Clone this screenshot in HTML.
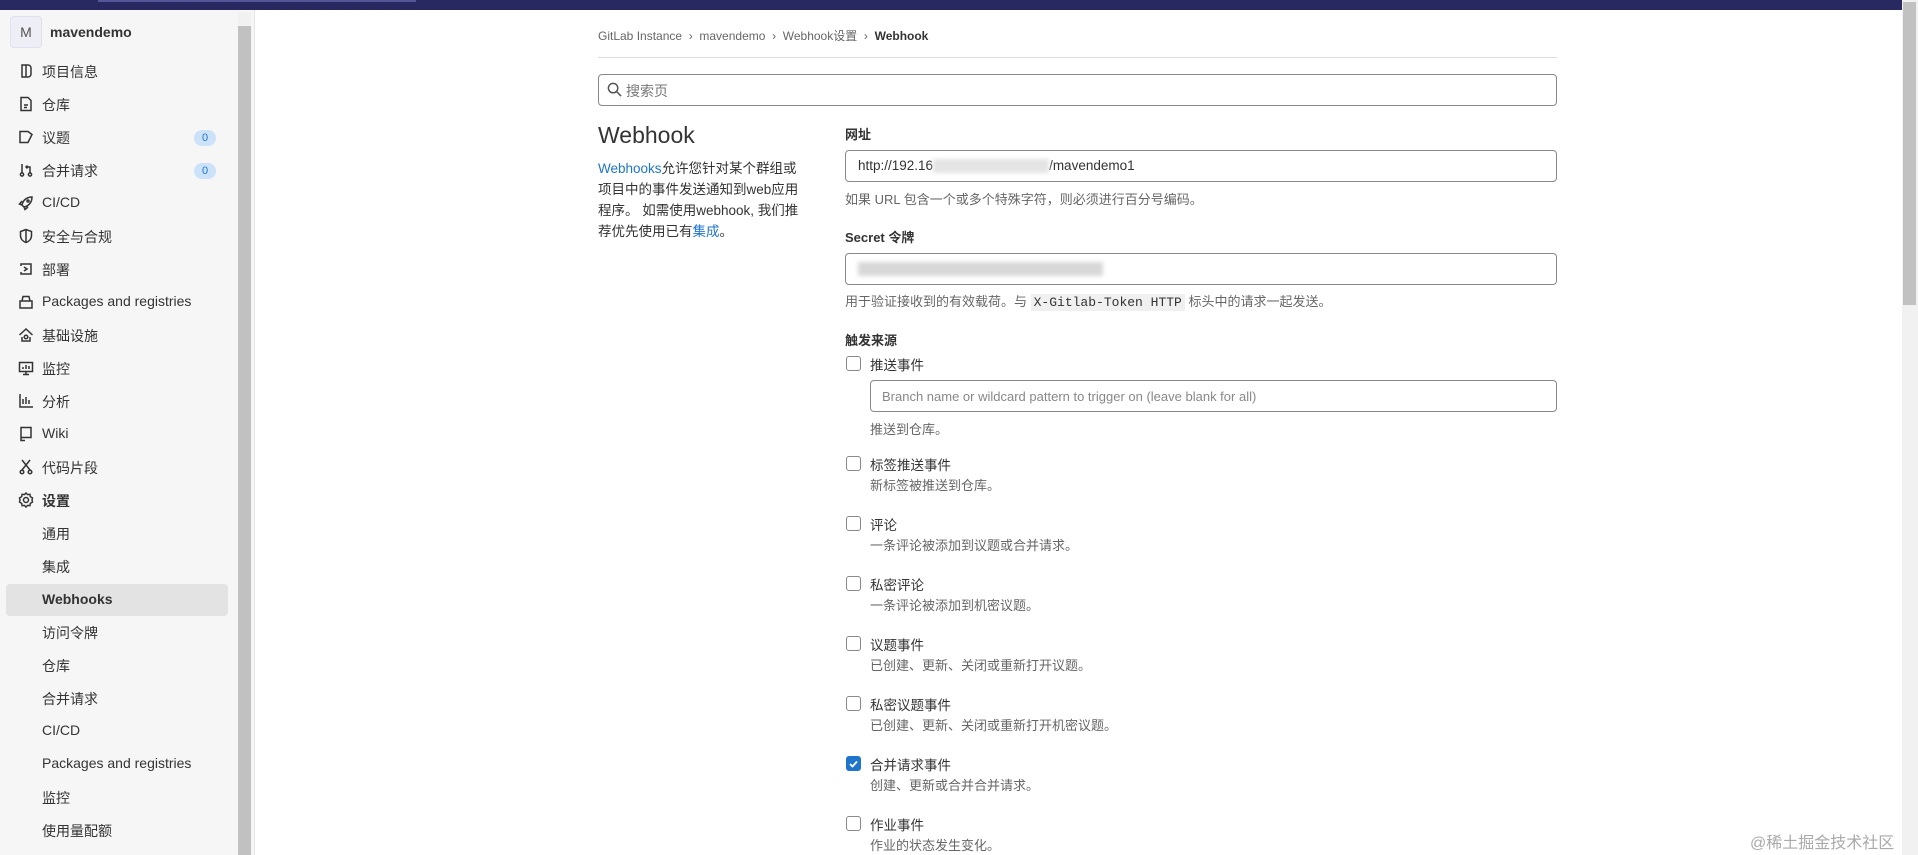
<!DOCTYPE html>
<html><head><meta charset="utf-8"><style>
*{box-sizing:border-box;margin:0;padding:0}
body{width:1918px;height:855px;overflow:hidden;background:#fff;font-family:"Liberation Sans","Noto Sans CJK SC",sans-serif;color:#333;position:relative;font-size:14px}
.a{position:absolute;white-space:nowrap}
.top{left:0;top:0;width:1902px;height:10px;background:#292961}
.sb{left:0;top:10px;width:255px;height:845px;background:#f6f6f6;border-right:1px solid #e5e5e5}
.nav{left:42px;font-size:14px;color:#333}
.ic{left:18px;width:16px;height:16px}
.sub{left:42px;font-size:14px;color:#333}
.badge{left:194px;width:22px;height:16px;border-radius:8px;background:#cbe2f9;color:#1f75cb;font-size:11px;text-align:center;line-height:16px}
.inp{border:1px solid #89888d;border-radius:4px;background:#fff}
.help{color:#666;font-size:13px}
.lbl{font-weight:bold;font-size:13px;color:#333}
.cb{left:846px;width:15px;height:15px;border:1px solid #89888d;border-radius:3px;background:#fff}
.ct{left:870px;font-size:13.5px;color:#333}
.cd{left:870px;font-size:13px;color:#666}
</style></head><body>
<div class="a top"></div>
<div class="a" style="left:98px;top:0;width:318px;height:2px;background:#55559a"></div>
<div class="a sb"></div>
<div class="a" style="left:238px;top:12px;width:13px;height:843px;background:#c1c1c1"></div>
<div class="a" style="left:238px;top:12px;width:13px;height:14px;background:#f1f1f1"></div>
<div class="a" style="left:10px;top:16px;width:32px;height:32px;border:1px solid #e0e0ee;border-radius:4px;background:#eeeef6;text-align:center;line-height:30px;font-size:14px;color:#555">M</div>
<div class="a" style="left:50px;top:24px;font-size:14px;font-weight:bold;color:#333">mavendemo</div>

<svg class="a ic" style="top:63px" viewBox="0 0 16 16" fill="none" stroke="#333" stroke-width="1.5"><path d="M4 2h6a3 3 0 0 1 3 3v6a3 3 0 0 1-3 3H4z M8 2v12"/></svg><div class="a nav" style="top:62px">项目信息</div>
<svg class="a ic" style="top:96px" viewBox="0 0 16 16" fill="none" stroke="#333" stroke-width="1.5"><path d="M3 1.5h7l3 3v10H3z M6 9h4 M6 11.5h3"/></svg><div class="a nav" style="top:95px">仓库</div>
<svg class="a ic" style="top:129px" viewBox="0 0 16 16" fill="none" stroke="#333" stroke-width="1.5"><path d="M2 2.5h8l4 3-4 8H2z"/></svg><div class="a nav" style="top:128px">议题</div><div class="a badge" style="top:130px">0</div>
<svg class="a ic" style="top:162px" viewBox="0 0 16 16" fill="none" stroke="#333" stroke-width="1.5"><circle cx="4" cy="12.5" r="1.6"/><circle cx="12" cy="12.5" r="1.6"/><path d="M4 2v9 M12 11V5H8 M9.5 3.5 8 5l1.5 1.5"/></svg><div class="a nav" style="top:161px">合并请求</div><div class="a badge" style="top:163px">0</div>
<svg class="a ic" style="top:195px" viewBox="0 0 16 16" fill="none" stroke="#333" stroke-width="1.5"><path d="M14 2C9 2 5 5 4 10l2 2c5-1 8-5 8-10z M4 10 1.5 9 4 6 M6 12l1 2.5 3-2.5"/><circle cx="10" cy="6" r="1"/></svg><div class="a nav" style="top:194px">CI/CD</div>
<svg class="a ic" style="top:228px" viewBox="0 0 16 16" fill="none" stroke="#333" stroke-width="1.5"><path d="M8 1.5 2.5 3.5v4c0 3.5 2.5 6 5.5 7 3-1 5.5-3.5 5.5-7v-4z M8 2v12"/></svg><div class="a nav" style="top:227px">安全与合规</div>
<svg class="a ic" style="top:261px" viewBox="0 0 16 16" fill="none" stroke="#333" stroke-width="1.5"><path d="M3 5V3h10v10H3v-2 M6 6l3 2-3 2"/></svg><div class="a nav" style="top:260px">部署</div>
<svg class="a ic" style="top:294px" viewBox="0 0 16 16" fill="none" stroke="#333" stroke-width="1.5"><path d="M2 7h12v7H2z M4 7l1-4.5h6L12 7"/></svg><div class="a nav" style="top:293px">Packages and registries</div>
<svg class="a ic" style="top:327px" viewBox="0 0 16 16" fill="none" stroke="#333" stroke-width="1.5"><path d="M1.5 8 8 2l6.5 6 M4 10v4h8v-4"/><circle cx="8" cy="10" r="1.8"/></svg><div class="a nav" style="top:326px">基础设施</div>
<svg class="a ic" style="top:360px" viewBox="0 0 16 16" fill="none" stroke="#333" stroke-width="1.5"><path d="M1.5 2.5h13v9h-13z M8 11.5v3 M5 14.5h6 M5 9V7 M8 9V5 M11 9V6"/></svg><div class="a nav" style="top:359px">监控</div>
<svg class="a ic" style="top:393px" viewBox="0 0 16 16" fill="none" stroke="#333" stroke-width="1.5"><path d="M2 1v13h13 M5 11V6 M8 11V4 M11 11V7"/></svg><div class="a nav" style="top:392px">分析</div>
<svg class="a ic" style="top:426px" viewBox="0 0 16 16" fill="none" stroke="#333" stroke-width="1.5"><path d="M3 1.5h10v10H3z M3 11.5v3h4"/></svg><div class="a nav" style="top:425px">Wiki</div>
<svg class="a ic" style="top:459px" viewBox="0 0 16 16" fill="none" stroke="#333" stroke-width="1.5"><path d="M4 1l8 10 M12 1 4 11"/><circle cx="4" cy="13" r="1.8"/><circle cx="12" cy="13" r="1.8"/></svg><div class="a nav" style="top:458px">代码片段</div>
<svg class="a ic" style="top:492px" viewBox="0 0 16 16" fill="none" stroke="#333" stroke-width="1.5"><circle cx="8" cy="8" r="2.5"/><path d="M8 1l1.6 1.6 2.3-.3.4 2.3L14.5 6 14 8l.5 2-2.2 1.4-.4 2.3-2.3-.3L8 15l-1.6-1.6-2.3.3-.4-2.3L1.5 10 2 8l-.5-2 2.2-1.4.4-2.3 2.3.3z"/></svg><div class="a nav" style="top:491px;font-weight:bold">设置</div>
<div class="a sub" style="top:524px">通用</div>
<div class="a sub" style="top:557px">集成</div>
<div class="a" style="left:6px;top:584px;width:222px;height:32px;border-radius:4px;background:#e3e3e3"></div>
<div class="a sub" style="top:591px;font-weight:bold">Webhooks</div>
<div class="a sub" style="top:623px">访问令牌</div>
<div class="a sub" style="top:656px">仓库</div>
<div class="a sub" style="top:689px">合并请求</div>
<div class="a sub" style="top:722px">CI/CD</div>
<div class="a sub" style="top:755px">Packages and registries</div>
<div class="a sub" style="top:788px">监控</div>
<div class="a sub" style="top:821px">使用量配额</div>

<div class="a" style="left:1902px;top:0;width:16px;height:855px;background:#f1f1f1"></div>
<div class="a" style="left:1903px;top:2px;width:13px;height:303px;background:#c1c1c1"></div>

<div class="a" style="left:598px;top:27px;font-size:12px;color:#666">GitLab Instance &nbsp;›&nbsp; mavendemo &nbsp;›&nbsp; Webhook设置 &nbsp;›&nbsp; <span style="color:#333;font-weight:bold">Webhook</span></div>
<div class="a" style="left:598px;top:57px;width:959px;height:1px;background:#dcdcde"></div>
<div class="a inp" style="left:598px;top:74px;width:959px;height:32px"></div>
<svg class="a" style="left:607px;top:82px" width="15" height="15" viewBox="0 0 16 16" fill="none" stroke="#555" stroke-width="1.6"><circle cx="6.5" cy="6.5" r="5"/><path d="M10.5 10.5 15 15"/></svg>
<div class="a" style="left:626px;top:81px;font-size:14px;color:#777">搜索页</div>

<div class="a" style="left:598px;top:122px;font-size:23px;color:#333">Webhook</div>
<div class="a" style="left:598px;top:158px;width:210px;white-space:normal;word-break:break-all;font-size:13.5px;line-height:21px;color:#333"><span style="color:#1f75cb">Webhooks</span>允许您针对某个群组或项目中的事件发送通知到web应用程序。 如需使用webhook, 我们推荐优先使用已有<span style="color:#1f75cb">集成</span>。</div>

<div class="a lbl" style="left:845px;top:124px">网址</div>
<div class="a inp" style="left:845px;top:150px;width:712px;height:32px"></div>
<div class="a" style="left:858px;top:158px;font-size:13.5px;color:#333">http://192.16<span style="display:inline-block;width:116px;height:14px;background:#e4e4e4;vertical-align:middle;filter:blur(2px)"></span>/mavendemo1</div>
<div class="a help" style="left:845px;top:189px">如果 URL 包含一个或多个特殊字符，则必须进行百分号编码。</div>
<div class="a lbl" style="left:845px;top:227px">Secret 令牌</div>
<div class="a inp" style="left:845px;top:253px;width:712px;height:32px"></div>
<div class="a" style="left:858px;top:262px;width:245px;height:14px;background:#d8d8d8;filter:blur(2px)"></div>
<div class="a help" style="left:845px;top:291px">用于验证接收到的有效载荷。与 <span style="font-family:'Liberation Mono',monospace;background:#f0f0f0;color:#333;padding:1px 3px">X-Gitlab-Token HTTP</span> 标头中的请求一起发送。</div>
<div class="a lbl" style="left:845px;top:330px">触发来源</div>

<div class="a cb" style="top:356px"></div><div class="a ct" style="top:354px">推送事件</div>
<div class="a inp" style="left:870px;top:380px;width:687px;height:32px"></div>
<div class="a" style="left:882px;top:389px;font-size:13px;color:#888">Branch name or wildcard pattern to trigger on (leave blank for all)</div>
<div class="a cd" style="top:419px">推送到仓库。</div>

<div class="a cb" style="top:456px"></div><div class="a ct" style="top:454px">标签推送事件</div><div class="a cd" style="top:475px">新标签被推送到仓库。</div>
<div class="a cb" style="top:516px"></div><div class="a ct" style="top:514px">评论</div><div class="a cd" style="top:535px">一条评论被添加到议题或合并请求。</div>
<div class="a cb" style="top:576px"></div><div class="a ct" style="top:574px">私密评论</div><div class="a cd" style="top:595px">一条评论被添加到机密议题。</div>
<div class="a cb" style="top:636px"></div><div class="a ct" style="top:634px">议题事件</div><div class="a cd" style="top:655px">已创建、更新、关闭或重新打开议题。</div>
<div class="a cb" style="top:696px"></div><div class="a ct" style="top:694px">私密议题事件</div><div class="a cd" style="top:715px">已创建、更新、关闭或重新打开机密议题。</div>
<div class="a cb" style="top:756px;background:#1f75cb;border-color:#1f75cb"></div>
<svg class="a" style="left:848px;top:759px" width="11" height="10" viewBox="0 0 11 10" fill="none" stroke="#fff" stroke-width="1.8"><path d="M2 5l2.5 2.5L9 2.5"/></svg>
<div class="a ct" style="top:754px">合并请求事件</div><div class="a cd" style="top:775px">创建、更新或合并合并请求。</div>
<div class="a cb" style="top:816px"></div><div class="a ct" style="top:814px">作业事件</div><div class="a cd" style="top:835px">作业的状态发生变化。</div>

<div class="a" style="left:1750px;top:829px;font-size:16px;color:#aaa">@稀土掘金技术社区</div>
</body></html>
